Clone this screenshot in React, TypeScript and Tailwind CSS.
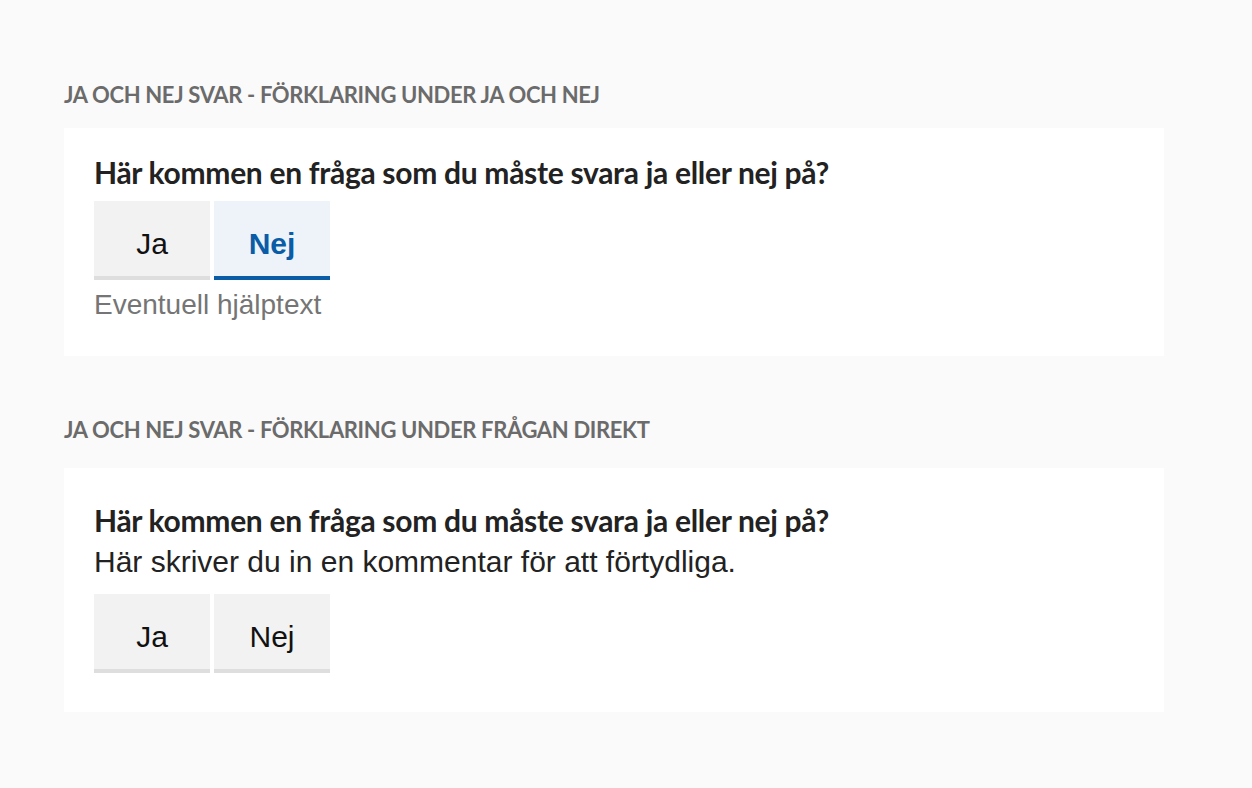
import React, { useState } from 'react';

type Answer = 'ja' | 'nej' | null;

interface ChoiceProps {
  value: Answer;
  onChange: (v: Answer) => void;
}

const YesNo: React.FC<ChoiceProps> = ({ value, onChange }) => {
  const options: { key: Answer; label: string }[] = [
    { key: 'ja', label: 'Ja' },
    { key: 'nej', label: 'Nej' },
  ];
  return (
    <div className="flex gap-1">
      {options.map((opt) => {
        const active = value === opt.key;
        return (
          <button
            key={opt.label}
            onClick={() => onChange(opt.key)}
            className={`w-[116px] h-[79px] pt-[10px] border-b-[4px] text-[30px] leading-9 font-['Liberation_Sans',Arial,sans-serif] ${
              active
                ? 'bg-[#edf3f9] border-[#0a5ca6] text-[#0a5ca6] font-bold'
                : 'bg-[#f2f2f2] border-[#dedede] text-[#111]'
            }`}
          >
            {opt.label}
          </button>
        );
      })}
    </div>
  );
};

const SectionTitle = ({ children }: { children: React.ReactNode }) => (
  <h2 className="text-[22px] font-bold uppercase text-[#6b6b6b] font-['Lato',sans-serif] leading-7 tracking-[-0.35px]">
    {children}
  </h2>
);

const Question = ({ children }: { children: React.ReactNode }) => (
  <h3 className="text-[30px] font-bold text-[#222] font-['Lato',sans-serif] leading-9 tracking-[-0.3px]">
    {children}
  </h3>
);

export default function App() {
  const [first, setFirst] = useState<Answer>('nej');
  const [second, setSecond] = useState<Answer>(null);

  return (
    <div className="min-h-[788px] bg-[#fafafa] px-16 pt-[81px]">
      {/* Förklaring under ja och nej */}
      <SectionTitle>Ja och nej svar - förklaring under ja och nej</SectionTitle>
      <div className="mt-[19px] w-[1100px] bg-white px-[30px] pt-[26px] pb-[35px]">
        <Question>Här kommen en fråga som du måste svara ja eller nej på?</Question>
        <div className="mt-[11px]">
          <YesNo value={first} onChange={setFirst} />
        </div>
        <p className="mt-[9px] text-[28px] leading-8 text-[#757575] font-['Liberation_Sans',Arial,sans-serif]">
          Eventuell hjälptext
        </p>
      </div>

      {/* Förklaring under frågan direkt */}
      <div className="mt-[60px]">
        <SectionTitle>Ja och nej svar - förklaring under frågan direkt</SectionTitle>
      </div>
      <div className="mt-[24px] w-[1100px] bg-white px-[30px] pt-[34px] pb-[39px]">
        <Question>Här kommen en fråga som du måste svara ja eller nej på?</Question>
        <p className="mt-[6px] text-[30px] leading-9 text-[#222] font-['Liberation_Sans',Arial,sans-serif]">
          Här skriver du in en kommentar för att förtydliga.
        </p>
        <div className="mt-[14px]">
          <YesNo value={second} onChange={setSecond} />
        </div>
      </div>
    </div>
  );
}
